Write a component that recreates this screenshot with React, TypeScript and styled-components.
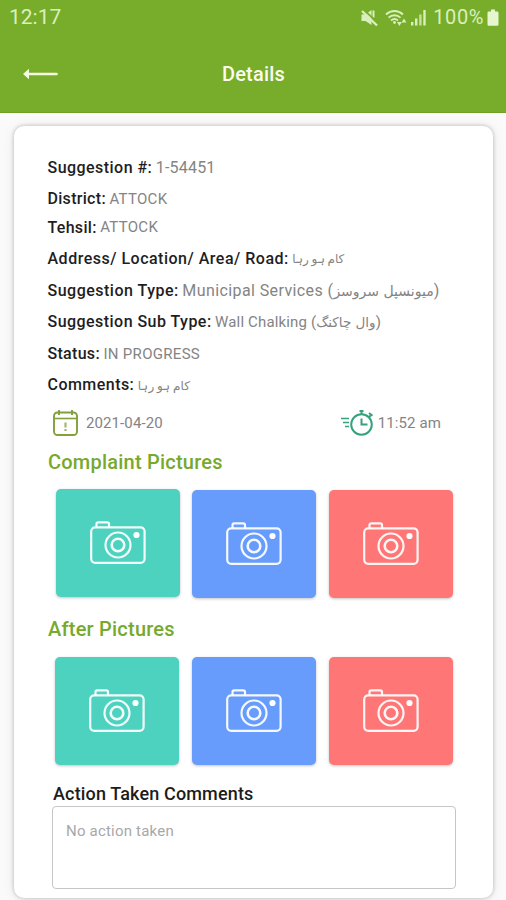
import React from "react";
import styled, { createGlobalStyle } from "styled-components";

const GlobalStyle = createGlobalStyle`
  * { box-sizing: border-box; }
  html, body { margin: 0; padding: 0; background: #fafafa; }
  body { font-family: Roboto, "DejaVu Sans", sans-serif; overflow: hidden; }
`;

const Screen = styled.div`
  width: 506px;
  height: 900px;
  overflow: hidden;
  background: #fafafa;
`;

const Header = styled.header`
  height: 113px;
  background: #78ac2b;
  border-bottom: 1px solid #6fa125;
`;

const StatusBar = styled.div`
  height: 35px;
  padding: 0 7px 0 9px;
  display: flex;
  align-items: center;
  justify-content: space-between;
  color: #d9f0bd;
  font-size: 21px;
  line-height: 35px;
`;

const StatusIcons = styled.div`
  display: flex;
  align-items: center;
`;

const Battery = styled.span`
  font-size: 20px;
  letter-spacing: 0.6px;
  margin: 0 3px 0 6px;
`;

const TitleBar = styled.div`
  height: 77px;
  padding: 0 22px;
  display: grid;
  grid-template-columns: 36px 1fr 36px;
  align-items: center;
`;

const Title = styled.h1`
  margin: 0;
  padding: 1px 0 0 1px;
  text-align: center;
  font-size: 20px;
  font-weight: 500;
  letter-spacing: 0.2px;
  color: #f8fdef;
`;

const Card = styled.main`
  width: 479px;
  height: 772px;
  margin: 13px 0 0 14px;
  padding: 25px 34px 0;
  background: #fff;
  border-radius: 10px;
  box-shadow: 0 0 4px rgba(0, 0, 0, 0.25), 0 1px 14px rgba(0, 0, 0, 0.07);
`;

const Row = styled.div<{ $h: number }>`
  height: ${(p) => p.$h}px;
  display: flex;
  align-items: center;
  white-space: nowrap;
`;

const Label = styled.span<{ $ls?: number }>`
  font-size: 16px;
  font-weight: 500;
  color: #1e1e1e;
  letter-spacing: ${(p) => p.$ls ?? 0.46}px;
  margin: 0 3.5px 0 -0.5px;
`;

const Value = styled.span<{ $size?: number; $ls?: number }>`
  font-size: ${(p) => p.$size ?? 15}px;
  letter-spacing: ${(p) => p.$ls ?? 0.1}px;
  color: #848484;
`;

const Urdu = styled.span<{ $size?: number; $ws?: number }>`
  font-family: "DejaVu Sans", sans-serif;
  font-size: ${(p) => p.$size ?? 14}px;
  word-spacing: ${(p) => p.$ws ?? 0}px;
  letter-spacing: 0;
`;

const Meta = styled.div`
  height: 43px;
  padding: 0 18px 0 4px;
  display: flex;
  align-items: center;
  justify-content: space-between;
`;

const MetaItem = styled.div<{ $gap: number }>`
  display: flex;
  align-items: center;
  gap: ${(p) => p.$gap}px;
`;

const Section = styled.section<{ $top: number }>`
  padding-top: ${(p) => p.$top}px;
`;

const Heading = styled.h2`
  margin: 0;
  height: 36px;
  line-height: 36px;
  font-size: 20px;
  font-weight: 500;
  letter-spacing: 0.22px;
  color: #77a92d;
`;

const Tiles = styled.div<{ $indent: number }>`
  display: flex;
  gap: 13px;
  margin: 10px 0 0 ${(p) => p.$indent}px;
  height: 109px;
`;

const Tile = styled.div<{ $bg: string; $lift?: boolean }>`
  width: 124px;
  height: 108px;
  margin-top: ${(p) => (p.$lift ? -1 : 0)}px;
  margin-right: ${(p) => (p.$lift ? -1 : 0)}px;
  padding-bottom: 1px;
  display: flex;
  align-items: center;
  justify-content: center;
  border-radius: 5px;
  background: ${(p) => p.$bg};
  box-shadow: 0 1px 3px rgba(0, 0, 0, 0.24);
`;

const ActionLabel = styled.label`
  display: block;
  margin: 15px 0 0 5px;
  height: 25px;
  line-height: 25px;
  font-size: 18px;
  font-weight: 500;
  letter-spacing: 0.15px;
  color: #1c1c1c;
`;

const CommentBox = styled.div`
  width: 404px;
  height: 83px;
  margin-left: 4px;
  padding: 15px 13px;
  border: 1px solid #c6c6c6;
  border-radius: 4px;
  font-size: 15px;
  letter-spacing: 0.2px;
  color: #a8a8a8;
`;

const BackArrow = () => (
  <svg width="36" height="14" viewBox="0 0 36 14">
    <path d="M7 7H34.5" stroke="#f2fbdf" strokeWidth="2.6" strokeLinecap="round" />
    <path d="M1 7L7 1.8V12.2Z" fill="#f2fbdf" />
  </svg>
);

const Mute = styled.svg`
  margin-right: 6px;
`;

const MuteIcon = () => (
  <Mute width="18" height="18" viewBox="0 0 18 18" fill="#d9f0bd">
    <path d="M.5 5.500h4L10.500 1v15L4.500 12H.5z" />
    <path d="M12.500 1.500v7" stroke="#d9f0bd" strokeWidth="2" />
    <path d="M2.500 .5L17.500 14.500" stroke="#78ac2b" strokeWidth="1.800" />
    <path d="M1 2L16 16.500" stroke="#d9f0bd" strokeWidth="2.400" />
  </Mute>
);

const WifiIcon = () => (
  <svg width="22" height="18" viewBox="0 0 22 18" fill="none" stroke="#d9f0bd">
    <path d="M1 5.500C6 .8 13 .8 18 5.500M3.500 8.700C7 5.400 12 5.400 15.500 8.700M6 11.500C8.300 9.600 10.700 9.600 13 11.500" strokeWidth="1.800" />
    <circle cx="9.500" cy="13.500" r="1.400" fill="#d9f0bd" stroke="none" />
    <path d="M12 13h4.800l-2.400 4zM16.600 13.500h4.800l-2.400-4z" fill="#d9f0bd" stroke="none" />
  </svg>
);

const Signal = styled.svg`
  margin-left: 3px;
`;

const SignalIcon = () => (
  <Signal width="17" height="18" viewBox="0 0 17 18" fill="#d9f0bd">
    <rect x="1" y="13" width="2.400" height="3.500" />
    <rect x="5" y="9.500" width="2.400" height="7" />
    <rect x="9.200" y="5.500" width="2.400" height="11" opacity=".8" />
    <rect x="13.300" y="1" width="2.400" height="15.500" />
  </Signal>
);

const BatteryIcon = () => (
  <svg width="12" height="18" viewBox="0 0 12 18" fill="#e6f7d0">
    <path d="M4 .5h4v2h2.200q1.300 0 1.300 1.300V15.500q0 1.200-1.300 1.200H1.800Q.5 16.700.5 15.500V3.800Q.5 2.500 1.800 2.500H4z" />
  </svg>
);

const CalendarIcon = () => (
  <svg width="27" height="28" viewBox="0 0 27 28" fill="none" stroke="#82a03c" strokeWidth="1.900">
    <rect x="2" y="3.500" width="23" height="22.500" rx="3.500" />
    <path d="M2 9.500H25" strokeWidth="1.600" />
    <path d="M7 1v5M20 1v5" />
    <path d="M13.500 13.500v5M13.500 20v2" strokeWidth="2.200" opacity=".75" />
  </svg>
);

const StopwatchIcon = () => (
  <svg width="34" height="28" viewBox="0 0 34 28" fill="none" stroke="#36a27c" strokeWidth="2">
    <circle cx="21.500" cy="15.500" r="10.300" />
    <path d="M21.500 5V2M19.500 2h4M29 4l3.500 2.800M30.500 6.500l-1.500 1.800M21.500 9.500v6h6" />
    <path d="M1 9.500h8M3 13.500h6M5 17.500h4" strokeWidth="1.700" />
  </svg>
);

const CameraIcon = () => (
  <svg width="56" height="44" viewBox="0 0 56 44" fill="none" stroke="#fff" strokeOpacity=".93" strokeWidth="2.200">
    <rect x="1.200" y="6.300" width="53.400" height="35.500" rx="4" />
    <path d="M6.500 6.500V3q0-1.700 1.700-1.700h9.100Q19 1.300 19 3v3.500" />
    <circle cx="28" cy="24" r="12.500" />
    <circle cx="28" cy="24" r="6.300" strokeWidth="2.600" />
    <circle cx="46.500" cy="14" r="3.100" fill="#fff" stroke="none" />
  </svg>
);

const COLORS = ["#4dd2c0", "#679cfc", "#fe7776"];

export default function App() {
  return (
    <Screen>
      <GlobalStyle />
      <Header>
        <StatusBar>
          <span>12:17</span>
          <StatusIcons>
            <MuteIcon />
            <WifiIcon />
            <SignalIcon />
            <Battery>100%</Battery>
            <BatteryIcon />
          </StatusIcons>
        </StatusBar>
        <TitleBar>
          <BackArrow />
          <Title>Details</Title>
        </TitleBar>
      </Header>
      <Card>
        <Row $h={32}><Label>Suggestion #:</Label><Value $size={16} $ls={0.2}>1-54451</Value></Row>
        <Row $h={31}><Label $ls={0.3}>District:</Label><Value $ls={0.3}>ATTOCK</Value></Row>
        <Row $h={26}><Label $ls={0.3}>Tehsil:</Label><Value $ls={0.3}>ATTOCK</Value></Row>
        <Row $h={36}><Label $ls={0.5}>Address/ Location/ Area/ Road:</Label><Value><Urdu $size={12} $ws={-1}>کام ہو رہا</Urdu></Value></Row>
        <Row $h={28}><Label $ls={0.5}>Suggestion Type:</Label><Value $size={16} $ls={0.4}>Municipal Services (<Urdu>میونسپل سروسز</Urdu>)</Value></Row>
        <Row $h={35}><Label>Suggestion Sub Type:</Label><Value $ls={0.15}>Wall Chalking (<Urdu $size={13.5}>وال چاکنگ</Urdu>)</Value></Row>
        <Row $h={29}><Label $ls={0.3}>Status:</Label><Value $ls={0.3}>IN PROGRESS</Value></Row>
        <Row $h={33}><Label>Comments:</Label><Value><Urdu $size={12} $ws={-1}>کام ہو رہا</Urdu></Value></Row>
        <Meta>
          <MetaItem $gap={7}><CalendarIcon /><Value>2021-04-20</Value></MetaItem>
          <MetaItem $gap={4}><StopwatchIcon /><Value>11:52 am</Value></MetaItem>
        </Meta>
        <Section $top={0}>
          <Heading>Complaint Pictures</Heading>
          <Tiles $indent={8}>
            {COLORS.map((c, i) => <Tile key={c} $bg={c} $lift={i === 0}><CameraIcon /></Tile>)}
          </Tiles>
        </Section>
        <Section $top={12}>
          <Heading>After Pictures</Heading>
          <Tiles $indent={7}>
            {COLORS.map((c) => <Tile key={c} $bg={c}><CameraIcon /></Tile>)}
          </Tiles>
        </Section>
        <ActionLabel>Action Taken Comments</ActionLabel>
        <CommentBox>No action taken</CommentBox>
      </Card>
    </Screen>
  );
}
